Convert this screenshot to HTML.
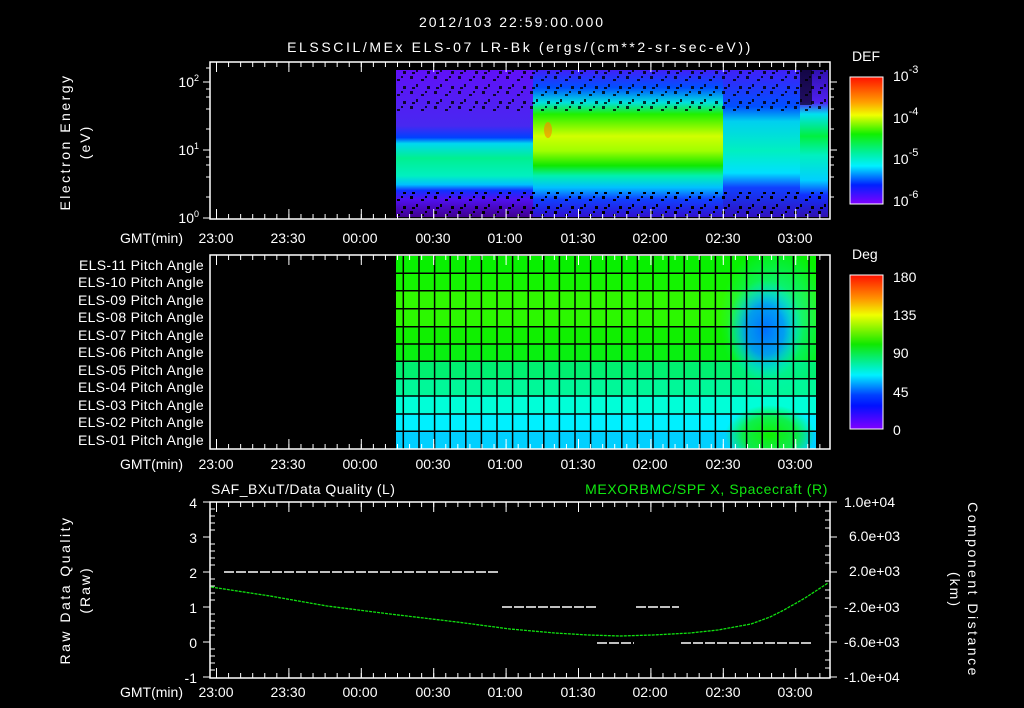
<!DOCTYPE html>
<html><head><meta charset="utf-8"><style>
html,body{margin:0;padding:0;background:#000;}
svg{display:block}
text{font-family:"Liberation Sans",sans-serif;fill:#fff;font-size:14px}
</style></head><body>
<svg width="1024" height="708" viewBox="0 0 1024 708" xmlns="http://www.w3.org/2000/svg">
<defs>
<clipPath id="cpTop"><rect x="396" y="70" width="432" height="147"/></clipPath>
<clipPath id="cpMid"><rect x="396" y="256" width="420" height="193"/></clipPath>
<linearGradient id="cbDef" x1="0" y1="0" x2="0" y2="1">
<stop offset="0" stop-color="#ff1000"/><stop offset="0.2" stop-color="#ffa000"/><stop offset="0.3" stop-color="#f0ff00"/><stop offset="0.45" stop-color="#10f000"/><stop offset="0.6" stop-color="#00f0a0"/><stop offset="0.7" stop-color="#00f0ff"/><stop offset="0.85" stop-color="#0020ff"/><stop offset="1" stop-color="#8000ff"/></linearGradient>
<linearGradient id="sA" x1="0" y1="0" x2="0" y2="1">
<stop offset="0" stop-color="#6010f8"/><stop offset="0.38" stop-color="#4828f0"/><stop offset="0.46" stop-color="#0040ff"/><stop offset="0.5" stop-color="#00d8f0"/><stop offset="0.6" stop-color="#00f090"/><stop offset="0.72" stop-color="#00f0c0"/><stop offset="0.78" stop-color="#00c0ff"/><stop offset="0.82" stop-color="#1030ff"/><stop offset="0.88" stop-color="#5010f0"/><stop offset="1" stop-color="#400090"/></linearGradient>
<linearGradient id="sB" x1="0" y1="0" x2="0" y2="1">
<stop offset="0" stop-color="#4020f8"/><stop offset="0.12" stop-color="#0050ff"/><stop offset="0.22" stop-color="#00e0e0"/><stop offset="0.3" stop-color="#20f000"/><stop offset="0.45" stop-color="#d0ff00"/><stop offset="0.55" stop-color="#a0ff00"/><stop offset="0.65" stop-color="#10e800"/><stop offset="0.72" stop-color="#00f0b0"/><stop offset="0.8" stop-color="#00c0ff"/><stop offset="0.88" stop-color="#1040ff"/><stop offset="1" stop-color="#3010d0"/></linearGradient>
<linearGradient id="sC" x1="0" y1="0" x2="0" y2="1">
<stop offset="0" stop-color="#4020f8"/><stop offset="0.25" stop-color="#0050ff"/><stop offset="0.35" stop-color="#00d0f0"/><stop offset="0.55" stop-color="#00f0c0"/><stop offset="0.7" stop-color="#00e0ff"/><stop offset="0.8" stop-color="#1040ff"/><stop offset="1" stop-color="#3010c0"/></linearGradient>
<linearGradient id="sD" x1="0" y1="0" x2="0" y2="1">
<stop offset="0" stop-color="#3010b0"/><stop offset="0.22" stop-color="#5020f0"/><stop offset="0.3" stop-color="#00e0f0"/><stop offset="0.45" stop-color="#00f040"/><stop offset="0.58" stop-color="#00f0c0"/><stop offset="0.75" stop-color="#00d0ff"/><stop offset="0.85" stop-color="#1030ff"/><stop offset="1" stop-color="#3010b0"/></linearGradient>
<pattern id="noise" width="24" height="15" patternUnits="userSpaceOnUse">
<rect x="2" y="1" width="3" height="3" fill="#000"/><rect x="13" y="4" width="3" height="2" fill="#000"/><rect x="8" y="9" width="2" height="3" fill="#000"/><rect x="19" y="11" width="3" height="3" fill="#000"/><rect x="17" y="1" width="2" height="2" fill="#000"/><rect x="4" y="12" width="3" height="2" fill="#000"/></pattern>
<linearGradient id="cbDeg" x1="0" y1="0" x2="0" y2="1">
<stop offset="0" stop-color="#ff1000"/><stop offset="0.15" stop-color="#ff9000"/><stop offset="0.26" stop-color="#f0ff00"/><stop offset="0.45" stop-color="#10e800"/><stop offset="0.6" stop-color="#00f0c0"/><stop offset="0.65" stop-color="#00f0ff"/><stop offset="0.78" stop-color="#0040ff"/><stop offset="0.85" stop-color="#0010ff"/><stop offset="1" stop-color="#8000ff"/></linearGradient>
<radialGradient id="blue"><stop offset="0" stop-color="#0070ff"/><stop offset="0.5" stop-color="#0090ff" stop-opacity="0.85"/><stop offset="1" stop-color="#00e0ff" stop-opacity="0"/></radialGradient>
<radialGradient id="cy"><stop offset="0" stop-color="#00f0d0"/><stop offset="1" stop-color="#00f0d0" stop-opacity="0"/></radialGradient>
<radialGradient id="grn"><stop offset="0" stop-color="#10f000"/><stop offset="0.6" stop-color="#10f020" stop-opacity="0.8"/><stop offset="1" stop-color="#10f020" stop-opacity="0"/></radialGradient>
</defs>

<text x="512" y="27" font-size="17" text-anchor="middle" letter-spacing="2">2012/103 22:59:00.000</text>
<text x="520" y="52" font-size="17" text-anchor="middle" letter-spacing="2.6">ELSSCIL/MEx ELS-07 LR-Bk  (ergs/(cm**2-sr-sec-eV))</text>

<g clip-path="url(#cpTop)">
<rect x="396" y="70" width="137" height="147" fill="url(#sA)"/>
<rect x="533" y="70" width="190" height="147" fill="url(#sB)"/>
<rect x="723" y="70" width="77" height="147" fill="url(#sC)"/>
<rect x="800" y="70" width="28" height="147" fill="url(#sD)"/>
<ellipse cx="548" cy="130" rx="4" ry="8" fill="#ff8000" opacity="0.6"/>
<rect x="396" y="70" width="432" height="42" fill="url(#noise)" opacity="0.8"/>
<rect x="396" y="192" width="432" height="25" fill="url(#noise)"/>
<rect x="800" y="70" width="12" height="35" fill="#000" opacity="0.6"/>
</g>
<rect x="210" y="62" width="620" height="157" fill="none" stroke="#fff" stroke-width="1.5"/>
<g stroke="#fff" fill="none">
<path d="M216 64.5H830M216 216.5H830" stroke-width="5" stroke-dasharray="1 11.067"/>
<path d="M216 67H830M216 214H830" stroke-width="10" stroke-dasharray="1 71.4"/>
</g>
<g stroke="#fff" stroke-width="1">
<path d="M203 82h7M203 150h7M203 218h7M206 129h4M206 109h4M206 97h4M206 89h4M206 197h4M206 177h4M206 165h4M206 157h4M206 68h4"/>
<path d="M830 82h7M830 150h7M830 129h4M830 109h4M830 97h4M830 89h4M830 197h4M830 177h4M830 165h4M830 157h4"/>
</g>
<text x="199" y="87" text-anchor="end">10<tspan font-size="9" dy="-6">2</tspan></text>
<text x="199" y="155" text-anchor="end">10<tspan font-size="9" dy="-6">1</tspan></text>
<text x="199" y="223" text-anchor="end">10<tspan font-size="9" dy="-6">0</tspan></text>
<text transform="translate(70,142) rotate(-90)" text-anchor="middle" font-size="15" letter-spacing="2.5">Electron Energy</text>
<text transform="translate(90,142) rotate(-90)" text-anchor="middle" font-size="15" letter-spacing="2">(eV)</text>
<rect x="850" y="77" width="33" height="127" fill="url(#cbDef)" stroke="#fff"/>
<text x="852" y="61" font-size="17">DEF</text>
<text x="893" y="81" font-size="17">10<tspan font-size="11" dy="-8">-3</tspan></text>
<text x="893" y="123" font-size="17">10<tspan font-size="11" dy="-8">-4</tspan></text>
<text x="893" y="164" font-size="17">10<tspan font-size="11" dy="-8">-5</tspan></text>
<text x="893" y="206" font-size="17">10<tspan font-size="11" dy="-8">-6</tspan></text>

<g font-size="14">
<text x="183" y="243" text-anchor="end">GMT(min)</text>
<text x="216" y="243" text-anchor="middle">23:00</text><text x="288" y="243" text-anchor="middle">23:30</text><text x="360" y="243" text-anchor="middle">00:00</text><text x="433" y="243" text-anchor="middle">00:30</text><text x="505" y="243" text-anchor="middle">01:00</text><text x="578" y="243" text-anchor="middle">01:30</text><text x="650" y="243" text-anchor="middle">02:00</text><text x="723" y="243" text-anchor="middle">02:30</text><text x="795" y="243" text-anchor="middle">03:00</text>
</g>

<g clip-path="url(#cpMid)">
<rect x="396" y="256" width="420" height="17.5" fill="#08f000"/>
<rect x="396" y="273.5" width="420" height="17.5" fill="#14f400"/>
<rect x="396" y="291" width="420" height="17.5" fill="#30f800"/>
<rect x="396" y="308.5" width="420" height="17.5" fill="#2cf800"/>
<rect x="396" y="326" width="420" height="17.5" fill="#10f000"/>
<rect x="396" y="343.5" width="420" height="17.5" fill="#08f010"/>
<rect x="396" y="361" width="420" height="17.5" fill="#00f070"/>
<rect x="396" y="378.5" width="420" height="17.5" fill="#00f898"/>
<rect x="396" y="396" width="420" height="17.5" fill="#00ffd8"/>
<rect x="396" y="413.5" width="420" height="17.5" fill="#00f0ff"/>
<rect x="396" y="431" width="420" height="18" fill="#00d0ff"/>
<ellipse cx="775" cy="320" rx="55" ry="75" fill="url(#cy)"/>
<ellipse cx="765" cy="330" rx="38" ry="50" fill="url(#blue)"/>
<ellipse cx="770" cy="435" rx="45" ry="30" fill="url(#grn)"/>
</g>
<g stroke="#000" stroke-width="1.5">
<path d="M396 273.3h420M396 290.7h420M396 308.7h420M396 326.7h420M396 344h420M396 361.3h420M396 378.7h420M396 396h420M396 414h420M396 431.3h420"/>
<path d="M403.3 256v193M419 256v193M434.6 256v193M450.2 256v193M465.8 256v193M481.4 256v193M497 256v193M512.6 256v193M528.2 256v193M543.8 256v193M559.4 256v193M575 256v193M590.6 256v193M606.2 256v193M621.8 256v193M637.4 256v193M653 256v193M668.6 256v193M684.2 256v193M699.8 256v193M715.4 256v193M731 256v193M746.6 256v193M762.2 256v193M777.8 256v193M793.4 256v193M809 256v193"/>
</g>
<rect x="210" y="255" width="620" height="194" fill="none" stroke="#fff" stroke-width="1.5"/>
<g stroke="#fff" fill="none">
<path d="M216 257.5H830M216 446.5H830" stroke-width="5" stroke-dasharray="1 11.067"/>
<path d="M216 260H830M216 444H830" stroke-width="10" stroke-dasharray="1 71.4"/>
</g>
<g font-size="14" text-anchor="end" letter-spacing="0.3">
<text x="204" y="270">ELS-11 Pitch Angle</text><text x="204" y="287">ELS-10 Pitch Angle</text><text x="204" y="305">ELS-09 Pitch Angle</text><text x="204" y="322">ELS-08 Pitch Angle</text><text x="204" y="340">ELS-07 Pitch Angle</text><text x="204" y="357">ELS-06 Pitch Angle</text><text x="204" y="375">ELS-05 Pitch Angle</text><text x="204" y="392">ELS-04 Pitch Angle</text><text x="204" y="410">ELS-03 Pitch Angle</text><text x="204" y="427">ELS-02 Pitch Angle</text><text x="204" y="445">ELS-01 Pitch Angle</text>
</g>
<rect x="850" y="275" width="33" height="154" fill="url(#cbDeg)" stroke="#fff"/>
<text x="852" y="259" font-size="17">Deg</text>
<g font-size="17"><text x="893" y="282">180</text><text x="893" y="320">135</text><text x="893" y="358">90</text><text x="893" y="397">45</text><text x="893" y="435">0</text></g>
<g font-size="14">
<text x="183" y="469" text-anchor="end">GMT(min)</text>
<text x="216" y="469" text-anchor="middle">23:00</text><text x="288" y="469" text-anchor="middle">23:30</text><text x="360" y="469" text-anchor="middle">00:00</text><text x="433" y="469" text-anchor="middle">00:30</text><text x="505" y="469" text-anchor="middle">01:00</text><text x="578" y="469" text-anchor="middle">01:30</text><text x="650" y="469" text-anchor="middle">02:00</text><text x="723" y="469" text-anchor="middle">02:30</text><text x="795" y="469" text-anchor="middle">03:00</text>
</g>

<text x="211" y="494" font-size="17" letter-spacing="0.5">SAF_BXuT/Data Quality (L)</text>
<text x="828" y="494" font-size="17" text-anchor="end" letter-spacing="0.6" style="fill:#10e810">MEXORBMC/SPF X, Spacecraft (R)</text>
<rect x="210" y="502" width="620" height="176" fill="none" stroke="#fff" stroke-width="1.5"/>
<g stroke="#fff" fill="none">
<path d="M216 504.5H830M216 675.5H830" stroke-width="5" stroke-dasharray="1 11.067"/>
<path d="M216 507H830M216 673H830" stroke-width="10" stroke-dasharray="1 71.4"/>
</g>
<g stroke="#fff" stroke-width="1">
<path d="M203 502h7M203 537h7M203 572h7M203 607h7M203 642h7M203 677h7"/>
<path d="M210 509h5M210 516h5M210 523h5M210 530h5M210 544h5M210 551h5M210 558h5M210 565h5M210 579h5M210 586h5M210 593h5M210 600h5M210 614h5M210 621h5M210 628h5M210 635h5M210 649h5M210 656h5M210 663h5M210 670h5"/>
<path d="M830 502h7M830 537h7M830 572h7M830 607h7M830 642h7M830 677h7"/>
<path d="M825 511h5M825 520h5M825 528h5M825 546h5M825 555h5M825 563h5M825 581h5M825 590h5M825 598h5M825 616h5M825 625h5M825 633h5M825 651h5M825 660h5M825 668h5"/>
</g>
<g font-size="15" text-anchor="end"><text x="197" y="508">4</text><text x="197" y="543">3</text><text x="197" y="578">2</text><text x="197" y="613">1</text><text x="197" y="648">0</text><text x="197" y="683">-1</text></g>
<g font-size="14"><text x="844" y="507">1.0e+04</text><text x="849" y="541">6.0e+03</text><text x="849" y="576">2.0e+03</text><text x="844" y="612">-2.0e+03</text><text x="844" y="647">-6.0e+03</text><text x="844" y="682">-1.0e+04</text></g>
<text transform="translate(70,590) rotate(-90)" text-anchor="middle" font-size="15" letter-spacing="2.5">Raw Data Quality</text>
<text transform="translate(90,590) rotate(-90)" text-anchor="middle" font-size="15" letter-spacing="2">(Raw)</text>
<text transform="translate(968,590) rotate(90)" text-anchor="middle" font-size="15" letter-spacing="2.5">Component Distance</text>
<text transform="translate(950,590) rotate(90)" text-anchor="middle" font-size="15" letter-spacing="2">(km)</text>
<g stroke="#fff" stroke-width="1.5" stroke-dasharray="10 2">
<path d="M224 572H500M502 607H596M636 607H679M597 643H634M681 643H813"/>
</g>
<polyline fill="none" stroke="#10e010" stroke-width="1.3" stroke-dasharray="3 1" points="211,587 270,596 327,606 390,614 457,622 510,629 555,633 588,635 620,636 653,635 690,633 718,630 751,624 770,617 784,610 805,598 828,583"/>
<g font-size="14">
<text x="183" y="697" text-anchor="end">GMT(min)</text>
<text x="216" y="697" text-anchor="middle">23:00</text><text x="288" y="697" text-anchor="middle">23:30</text><text x="360" y="697" text-anchor="middle">00:00</text><text x="433" y="697" text-anchor="middle">00:30</text><text x="505" y="697" text-anchor="middle">01:00</text><text x="578" y="697" text-anchor="middle">01:30</text><text x="650" y="697" text-anchor="middle">02:00</text><text x="723" y="697" text-anchor="middle">02:30</text><text x="795" y="697" text-anchor="middle">03:00</text>
</g>
</svg>
</body></html>
